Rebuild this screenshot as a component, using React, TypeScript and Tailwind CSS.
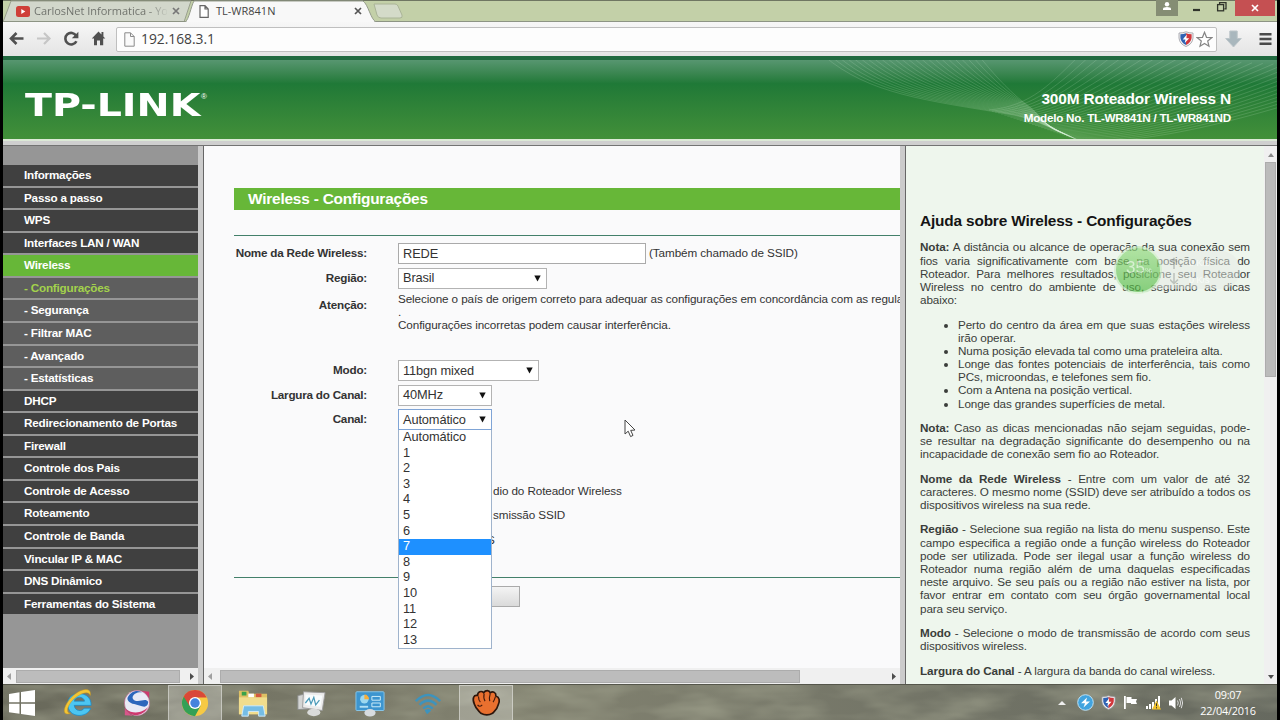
import type { ReactNode } from "react";

type MenuItem = { label: string; kind?: "active" | "sub" | "current" };

const menu: MenuItem[] = [
  { label: "Informações" },
  { label: "Passo a passo" },
  { label: "WPS" },
  { label: "Interfaces LAN / WAN" },
  { label: "Wireless", kind: "active" },
  { label: "- Configurações", kind: "current" },
  { label: "- Segurança", kind: "sub" },
  { label: "- Filtrar MAC", kind: "sub" },
  { label: "- Avançado", kind: "sub" },
  { label: "- Estatísticas", kind: "sub" },
  { label: "DHCP" },
  { label: "Redirecionamento de Portas" },
  { label: "Firewall" },
  { label: "Controle dos Pais" },
  { label: "Controle de Acesso" },
  { label: "Roteamento" },
  { label: "Controle de Banda" },
  { label: "Vincular IP & MAC" },
  { label: "DNS Dinâmico" },
  { label: "Ferramentas do Sistema" },
];

const menuStyles = {
  normal: "bg-[#404040] text-white",
  active: "bg-[#67b738] text-white",
  sub: "bg-[#5e5e5e] text-white",
  current: "bg-[#5e5e5e] text-[#a3d24c]",
};

const channels = ["Automático", "1", "2", "3", "4", "5", "6", "7", "8", "9", "10", "11", "12", "13"];

function TabStrip() {
  return (
    <div className="relative h-[22px] shrink-0 bg-[#c3d0a8] border-t border-[#6f7662] font-['Open_Sans',sans-serif] text-[11px]">
      <svg className="absolute -left-[3px] -top-px" width="1280" height="22" viewBox="0 0 1280 22">
        <path d="M3 22 L11 1 H191 L184 22Z" fill="#d2d7cb" stroke="#9aa08e" />
        <path d="M0 21.5 H1280" stroke="#8d9484" />
        <path d="M185 22 C189 20 191 6 194 1 H363 C368 4 371 20 376 22Z" fill="#f8f8f8" stroke="#959b8c" />
        <path d="M187 21.5 H374" stroke="#f8f8f8" strokeWidth="2" />
        <path d="M374 4 H395 Q397 4 398 6 L402 15 Q403 18 400 18 H381 Q378 18 377 15Z" fill="#d4dbc9" stroke="#aab497" />
      </svg>
      <div className="relative flex h-5 items-center">
        <svg className="ml-[13px]" width="14" height="11" viewBox="0 0 14 11">
          <rect width="14" height="11" rx="2.5" fill="#cf3f38" />
          <path d="M5.3 3 L9.3 5.5 L5.3 8Z" fill="#fff" />
        </svg>
        <span className="ml-1 w-[133px] overflow-hidden whitespace-nowrap bg-linear-to-r from-[#6c6f69] from-85% to-[#c9cec3] bg-clip-text tracking-[-0.02px] text-transparent">CarlosNet Informatica - Yo</span>
        <CloseMark className="ml-[5px]" color="#777" />
        <svg className="ml-[19px]" width="10" height="13" viewBox="0 0 10 13">
          <path d="M1 .7 H6 L9.2 4 V12.3 H1Z M6 .7 V4 H9.2" fill="#fff" stroke="#666" strokeWidth="1.2" />
        </svg>
        <span className="ml-[7px] w-[138px] text-[#444]">TL-WR841N</span>
        <CloseMark color="#555" />
      </div>
      <div className="absolute right-[2px] -top-px flex">
        <div className="flex h-4 w-[22px] justify-center bg-[#858d74]">
          <svg width="10" height="14" viewBox="0 0 10 14" fill="#fff">
            <circle cx="5" cy="4.3" r="2.2" />
            <path d="M1 10 V8.5 Q1.5 7 5 7 Q8.5 7 9 8.5 V10Z" />
          </svg>
        </div>
        <svg width="57" height="16" viewBox="0 0 57 16" fill="none" stroke="#30342b" strokeWidth="1.3">
          <path d="M15 10 H22" strokeWidth="2.2" />
          <rect x="39.6" y="4.6" width="6" height="6.2" />
          <path d="M41.6 4 V2.7 H48 V8.8 H46.4" />
        </svg>
        <div className="flex h-4 w-10 items-center justify-center bg-[#c55052]">
          <CloseMark color="#fff" />
        </div>
      </div>
    </div>
  );
}

function CloseMark({ color, className }: { color: string; className?: string }) {
  return (
    <svg className={className} width="8" height="8" viewBox="0 0 8 8">
      <path d="M1 1 L7 7 M7 1 L1 7" stroke={color} strokeWidth="1.7" />
    </svg>
  );
}

function Shield({ size }: { size: number }) {
  return (
    <svg width={size} height={size} viewBox="0 0 16 16">
      <path d="M1 2 Q5 2 8 .8 Q11 2 15 2 V7 Q14.5 13 8 15.5 Q1.5 13 1 7Z" fill="#f2f2f2" stroke="#9b9ba2" strokeWidth=".8" />
      <path d="M2.4 3.3 Q5.5 3.2 8 2.2 V14 Q3 11.5 2.4 7Z" fill="#2f62b3" />
      <path d="M13.6 3.3 Q10.5 3.2 8 2.2 V14 Q13 11.5 13.6 7Z" fill="#d1363b" />
      <path d="M8.8 3.5 L4.7 8.4 H7.4 L6.8 12 L11.2 7.2 H8.4Z" fill="#fff" />
    </svg>
  );
}

function Toolbar() {
  return (
    <div className="flex h-[34px] shrink-0 items-center bg-linear-to-b from-[#f7f7f7] to-[#e4e4e4] pl-[5px]">
      <svg className="shrink-0" width="100" height="24" viewBox="8 27 100 24" fill="none" stroke="#505050" strokeWidth="2.6">
        <path d="M11 38.5 H23.5 M16.5 33 L11 38.5 L16.5 44" />
        <path d="M37 38.5 H49.5 M44 33 L49.5 38.5 L44 44" stroke="#c6c6c6" strokeWidth="2.2" />
        <path d="M76.2 35.8 A5.8 5.8 0 1 0 76.4 41.2" />
        <path d="M78.4 31.8 V38.3 H71.8Z" fill="#505050" stroke="none" />
        <path d="M98.5 31.5 L91.8 38.6 H94 V45.3 H97 V40.5 H100 V45.3 H103.2 V38.6 H105.3 L103.4 36.5 V32 H101.5 V34.4Z" fill="#505050" stroke="none" />
      </svg>
      <div className="ml-2 flex h-[25px] w-[1101px] shrink-0 items-center rounded-[2px] border border-[#bfbfbf] bg-[#fdfdfd] pl-[7px] pr-[3px]">
        <svg width="11" height="15" viewBox="0 0 11 15">
          <path d="M.8 .8 H6.5 L10.2 4.5 V14.2 H.8Z M6.5 .8 V4.5 H10.2" fill="#fafafa" stroke="#8b8b8b" />
        </svg>
        <span className="ml-[6px] flex-1 font-['Open_Sans',sans-serif] text-[13.8px] leading-none text-[#414141]">192.168.3.1</span>
        <Shield size={16} />
        <svg className="ml-0.5" width="17" height="17" viewBox="0 0 17 17">
          <path d="M8.5 1.3 L10.5 6.3 L15.8 6.6 L11.7 10 L13 15.3 L8.5 12.4 L4 15.3 L5.3 10 L1.2 6.6 L6.5 6.3Z" fill="#fff" stroke="#858585" strokeWidth="1.2" />
        </svg>
      </div>
      <svg className="ml-2" width="17" height="18" viewBox="0 0 17 18">
        <path d="M4.8 1 H12.2 V8.5 H16.3 L8.5 17 L.7 8.5 H4.8Z" fill="#a9b7bd" stroke="#bcc5c9" />
      </svg>
      <svg className="ml-[17px]" width="13" height="14" viewBox="0 0 13 14" stroke="#4a4a4a" strokeWidth="2.5">
        <path d="M.5 2.2 H12.5 M.5 7 H12.5 M.5 11.8 H12.5" />
      </svg>
    </div>
  );
}

// Two fans of hairlines that cross under the model name
function HeaderWaves() {
  const left = Array.from({ length: 24 }, (_, i) => i / 23);
  const right = Array.from({ length: 30 }, (_, i) => i / 29);
  return (
    <svg className="absolute right-0 -top-1" width="480" height="83" viewBox="3 -4 480 83" fill="none" stroke="#d9f5dc" strokeWidth=".7">
      {left.map((t) => (
        <path
          key={`l${t}`}
          strokeOpacity={0.24}
          d={`M${30 + t * 155} -4 C${75 + t * 123} ${34 - t * 22} ${130 + t * 82} ${40 - t * 12} ${220 + t * 8} ${55 - t * 14} C${245 + t * 5} ${61 - t * 5} ${264 - t * 14} ${71 - t * 4} ${284 - t * 20} ${80 - t * 9}`}
        />
      ))}
      {right.map((t) => (
        <path
          key={`r${t}`}
          strokeOpacity={0.24}
          d={`M${195 + t * 89} ${50 + t * 30} C${238 + t * 112} ${46 + t * 40} ${258 + t * 202} ${22 + t * 38} ${287 + t * 310} ${-6 + t * 16}`}
        />
      ))}
    </svg>
  );
}

function Header() {
  return (
    <header className="relative flex h-[83px] shrink-0 justify-between overflow-hidden border-t-4 border-[#20693f] bg-linear-to-b from-[#579670] via-[#1f7937] via-30% to-[#429039] text-white">
      <HeaderWaves />
      <div className="flex pl-[22px] pt-[34px]">
        <span className="w-[175px] origin-left scale-x-[1.255] whitespace-nowrap font-['DejaVu_Sans',sans-serif] text-[31.5px] leading-[23px] font-bold">
          TP-LINK
        </span>
        <span className="ml-[1px] -mt-1 text-[8px] leading-[14px]">®</span>
      </div>
      <div className="relative pr-[46px] pt-[30px] text-right font-bold whitespace-nowrap">
        <div className="text-[15.4px] leading-[18px] tracking-[-0.15px]">300M Roteador Wireless N</div>
        <div className="mt-[3px] text-[11.7px] leading-[14px] tracking-[-0.25px]">Modelo No. TL-WR841N / TL-WR841ND</div>
      </div>
    </header>
  );
}

function HScroll({ thumb }: { thumb: string }) {
  return (
    <div className="flex h-4 shrink-0 items-center justify-between bg-[#f0f0f0] px-1">
      <svg width="4" height="7" viewBox="0 0 4 7"><path d="M4 0 L0 3.5 L4 7Z" fill="#a0a0a0" /></svg>
      <div className="flex flex-1 pl-2 pr-2"><div className={`h-[13px] border border-[#acacac] bg-[#bcbcbc] ${thumb}`} /></div>
      <svg width="4" height="7" viewBox="0 0 4 7"><path d="M0 0 L4 3.5 L0 7Z" fill="#4d4d4d" /></svg>
    </div>
  );
}

function Sidebar() {
  return (
    <nav className="flex w-[195px] shrink-0 flex-col bg-[#969696]">
      <div className="flex-1 pt-[19px]">
        {menu.map((item) => (
          <div key={item.label} className="h-[22.57px] pb-[2px]">
            <div className={`h-full pl-[21px] text-[11.7px] leading-[20.5px] font-bold tracking-[-0.21px] whitespace-nowrap ${menuStyles[item.kind ?? "normal"]}`}>
              {item.label}
            </div>
          </div>
        ))}
      </div>
      <HScroll thumb="w-[164px] -ml-[3px]" />
    </nav>
  );
}

function Divider() {
  return <div className="w-[6px] shrink-0 border-r border-[#666] bg-[#cbcbcb]" />;
}

function Select({ value, width, focused }: { value: string; width: string; focused?: boolean }) {
  return (
    <div className={`flex h-[21px] items-center justify-between border bg-white pl-1 pr-[5px] text-[12.8px] tracking-[-0.12px] ${width} ${focused ? "border-[#7fa4d6]" : "border-[#b3b3b3]"}`}>
      <span>{value}</span>
      <svg width="7" height="7" viewBox="0 0 7 7"><path d="M.3 .5 H6.7 L3.5 6.5Z" fill="#111" /></svg>
    </div>
  );
}

function Row({ label, height, children }: { label?: string; height: string; children?: ReactNode }) {
  return (
    <div className={`flex items-center ${height}`}>
      <div className="w-[133px] shrink-0 pb-px text-right font-bold tracking-[-0.23px] whitespace-nowrap">{label}</div>
      <div className="ml-[31px] flex items-center">{children}</div>
    </div>
  );
}

function Settings() {
  return (
    <main className="flex w-[696px] shrink-0 flex-col overflow-hidden bg-[#fafafb] text-[11.7px] tracking-[-0.1px] text-[#333]">
      <div className="flex-1 overflow-hidden pl-[30px] pt-[42px] whitespace-nowrap">
        <h1 className="h-[22px] bg-[#67b738] pl-[14px] text-[15.4px] leading-[21px] font-bold tracking-[-0.2px] text-white">Wireless - Configurações</h1>
        <div className="mt-[25px] h-px bg-[#43806a]" />
        <div className="pt-[5px]">
          <Row label="Nome da Rede Wireless:" height="h-[25px]">
            <div className="h-[21px] w-[248px] border border-[#aaa] bg-white pl-1 text-[12.8px] leading-[20px]">REDE</div>
            <span className="ml-[3px] pb-[2px] tracking-[-0.08px]">(Também chamado de SSID)</span>
          </Row>
          <Row label="Região:" height="h-6"><Select value="Brasil" width="w-[149px]" /></Row>
          <div className="flex h-[68px] leading-[13.2px]">
            <div className="w-[133px] shrink-0 pt-[8px] text-right font-bold tracking-[-0.23px]">Atenção:</div>
            <div className="ml-[31px] pt-[1.6px]">
              <p>Selecione o país de origem correto para adequar as configurações em concordância com as regulamentações</p>
              <p>.</p>
              <p>Configurações incorretas podem causar interferência.</p>
            </div>
          </div>
          <Row label="Modo:" height="h-[25px]"><Select value="11bgn mixed" width="w-[141px]" /></Row>
          <Row label="Largura do Canal:" height="h-6"><Select value="40MHz" width="w-[94px]" /></Row>
          <Row label="Canal:" height="h-[25px]">
            <div className="relative">
              <Select value="Automático" width="w-[94px]" focused />
              <ul className="absolute top-full left-0 z-10 w-[94px] border border-t-0 border-[#9fb3cc] bg-white text-[12.8px] leading-[14.6px]">
                {channels.map((c) => (
                  <li key={c} className={c === "7" ? "bg-[#1e90ff] pb-px pl-1 text-white" : "pb-px pl-1"}>{c}</li>
                ))}
              </ul>
            </div>
          </Row>
          <div className="pt-[47px] pl-[259px] leading-[24.4px]">
            <p>dio do Roteador Wireless</p>
            <p>smissão SSID</p>
            <p className="-ml-[6px]">S</p>
          </div>
        </div>
        <div className="mt-[25px] h-px bg-[#43806a]" />
        <div className="mt-[8px] ml-[164px] h-[21px] w-[122px] border border-[#aaa] bg-linear-to-b from-[#f4f4f4] to-[#dadada]" />
      </div>
      <HScroll thumb="w-[580px]" />
    </main>
  );
}

// Each line is set on its own so the justified breaks stay put
function Lines({ lines }: { lines: ReactNode[] }) {
  return (
    <>
      {lines.map((line, i) => (
        <span key={i} className={i < lines.length - 1 ? "block text-justify [text-align-last:justify]" : "block"}>
          {line}
        </span>
      ))}
    </>
  );
}

function Help() {
  return (
    <aside className="flex min-w-0 flex-1 bg-[#eef6ed] text-[11.7px] leading-[13.17px] tracking-[-0.1px] text-[#3a3d3a]">
      <div className="flex-1 overflow-hidden pl-[14px] pr-[14px] pt-[66px] whitespace-nowrap">
        <h2 className="text-[15.4px] leading-[18px] font-bold tracking-[-0.17px] text-[#141414]">Ajuda sobre Wireless - Configurações</h2>
        <div className="flex flex-col gap-[11.25px] pt-[10.4px]">
          <p>
            <Lines
              lines={[
                <><b>Nota:</b> A distância ou alcance de operação da sua conexão sem</>,
                "fios varia significativamente com base na posição física do",
                "Roteador. Para melhores resultados, posicione seu Roteador",
                "Wireless no centro do ambiente de uso, seguindo as dicas",
                "abaixo:",
              ]}
            />
          </p>
          <ul className="list-disc pl-[38px]">
            <li><Lines lines={["Perto do centro da área em que suas estações wireless", "irão operar."]} /></li>
            <li><Lines lines={["Numa posição elevada tal como uma prateleira alta."]} /></li>
            <li><Lines lines={["Longe das fontes potenciais de interferência, tais como", "PCs, microondas, e telefones sem fio."]} /></li>
            <li><Lines lines={["Com a Antena na posição vertical."]} /></li>
            <li><Lines lines={["Longe das grandes superfícies de metal."]} /></li>
          </ul>
          <p>
            <Lines
              lines={[
                <><b>Nota:</b> Caso as dicas mencionadas não sejam seguidas, pode-</>,
                "se resultar na degradação significante do desempenho ou na",
                "incapacidade de conexão sem fio ao Roteador.",
              ]}
            />
          </p>
          <p>
            <Lines
              lines={[
                <><b>Nome da Rede Wireless</b> - Entre com um valor de até 32</>,
                "caracteres. O mesmo nome (SSID) deve ser atribuído a todos os",
                "dispositivos wireless na sua rede.",
              ]}
            />
          </p>
          <p>
            <Lines
              lines={[
                <><b>Região</b> - Selecione sua região na lista do menu suspenso. Este</>,
                "campo especifica a região onde a função wireless do Roteador",
                "pode ser utilizada. Pode ser ilegal usar a função wireless do",
                "Roteador numa região além de uma daquelas especificadas",
                "neste arquivo. Se seu país ou a região não estiver na lista, por",
                "favor entrar em contato com seu órgão governamental local",
                "para seu serviço.",
              ]}
            />
          </p>
          <p>
            <Lines lines={[<><b>Modo</b> - Selecione o modo de transmissão de acordo com seus</>, "dispositivos wireless."]} />
          </p>
          <p>
            <Lines lines={[<><b>Largura do Canal</b> - A largura da banda do canal wireless.</>]} />
          </p>
        </div>
      </div>
      <div className="flex w-[13px] shrink-0 flex-col items-center justify-between bg-[#f0f0f0] pt-[7px] pb-[5px]">
        <svg width="6" height="4" viewBox="0 0 6 4"><path d="M0 4 L3 0 L6 4Z" fill="#888" /></svg>
        <div className="mt-[5px] mb-auto h-[215px] w-[11px] border border-[#acacac] bg-[#bbb]" />
        <svg width="6" height="4" viewBox="0 0 6 4"><path d="M0 0 L3 4 L6 0Z" fill="#4d4d4d" /></svg>
      </div>
    </aside>
  );
}

// Memory / network meter floating over the help column
function SpeedBadge() {
  return (
    <div className="absolute left-[1111px] top-[246px] z-20 h-12 w-[128px] opacity-80">
      <div className="absolute left-6 top-[5px] h-[38px] w-[102px] rounded-r-full bg-[#e6ebe6]/60" />
      <svg className="absolute left-[56px] top-[10px]" width="60" height="30" viewBox="0 0 60 30" fill="none" stroke="#8d938d" strokeOpacity=".6" strokeWidth="1.6">
        <path d="M4 13 V3 M1 6 L4 2.5 L7 6" />
        <path d="M4 17 V27 M0 23.5 L4 27.5 L8 23.5" />
      </svg>
      <div className="absolute left-[75px] top-[9px] text-[9px] leading-[17px] text-white/70">
        <div>0 K/s</div>
        <div>0 K/s</div>
      </div>
      <div className="absolute left-0 top-0 size-12 rounded-full border-2 border-white/60 bg-linear-to-b from-[#8fda7a]/80 to-[#4bb93c]/80" />
      <div className="absolute left-[12px] top-[12px] text-[17px] leading-5 text-white/60">35<span className="text-[8px]">%</span></div>
    </div>
  );
}

function TaskIcon({ active, children }: { active?: boolean; children: ReactNode }) {
  return (
    <div className={`flex h-full w-[54px] items-center justify-center ${active ? "border border-white/40 border-b-0 bg-white/25" : ""}`}>
      <svg width="30" height="30" viewBox="0 0 32 32">{children}</svg>
    </div>
  );
}

function Taskbar() {
  return (
    <footer className="relative flex h-9 shrink-0 items-center border-t border-[#55564b] bg-linear-to-r from-[#68685a] via-[#828270] via-40% to-[#66695f]">
      {/* blurred grass behind the glass */}
      <svg className="absolute inset-0 size-full" preserveAspectRatio="none">
        <filter id="grass">
          <feTurbulence type="fractalNoise" baseFrequency="0.015 0.05" numOctaves="3" seed="7" />
          <feColorMatrix values="0 0 0 0 .38  0 0 0 0 .39  0 0 0 0 .29  1.1 0 0 0 -.38" />
        </filter>
        <rect width="100%" height="100%" filter="url(#grass)" />
      </svg>
      <div className="relative flex h-full gap-[4.3px] pl-0">
        <div className="flex h-full w-[44px] items-center pl-[5px] mr-[-6px]">
          <svg width="28" height="28" viewBox="0 0 28 28" fill="#fff">
            <path d="M1 5 L11.5 3.3 V13.2 H1Z M13 3 L27 1 V13.2 H13Z M1 14.7 H11.5 V24.8 L1 23.3Z M13 14.7 H27 V27 L13 25Z" />
          </svg>
        </div>
        <div className="h-full pl-1.5"><TaskIcon>
          <path fillRule="evenodd" d="M30 18.5 H12 C12.5 25 20.5 25.5 22.5 21.5 H29.5 C26 32.5 5 32.5 5 17 C5 2 30.5 2 30 18.5Z M12 14 H23 C22 8.5 13 8.5 12 14Z" fill="#4cc6f2" stroke="#1889c9" strokeWidth=".8" />
          <path d="M8 27 C-3 31 1 17 11 8 C20 0 31 -1 29 8 C28 3 20 5 13 10.5 C5 17 2 27 8 27Z" fill="#f3c534" stroke="#c9951c" strokeWidth=".5" />
        </TaskIcon></div>
        <TaskIcon>
          <circle cx="16" cy="16" r="13.5" fill="#e9eaf5" />
          <path d="M6 10 C11 1 20 3 21 5 C15 3 8 10 13 13 C19 16 25 10 28 15 C27 24 19 18 13 17 C8 16 5 13 6 10Z" fill="#2d67bc" />
          <path d="M4 22 C8 31 22 32 28 20 C23 26 12 29 4 22Z M20 3 L29 4 V11 C27 7 24 4 20 3Z" fill="#cf386e" />
          <path d="M3 29 V21 C5 25 8 28 12 29.5Z" fill="#d7568a" />
          <circle cx="16" cy="16" r="13.5" fill="none" stroke="#b3386b" strokeOpacity=".5" />
        </TaskIcon>
        <TaskIcon active>
          <circle cx="16" cy="16" r="14" fill="#f6c944" />
          <path d="M16 16 L3.9 9 A14 14 0 0 0 16 30 L22 19Z" fill="#33a056" />
          <path d="M16 16 L10 19 L3.9 9 A14 14 0 0 1 28.5 10 H16Z" fill="#d94838" />
          <circle cx="16" cy="16" r="6.5" fill="#fff" />
          <circle cx="16" cy="16" r="5" fill="#4583dd" />
        </TaskIcon>
        <TaskIcon>
          <path d="M1 3 H11 L12 6 H31 V28 H1Z" fill="#dec064" />
          <path d="M4 4 h5 v4 h-5z" fill="#39a34a" /><path d="M11 6 h6 v4 h-6z" fill="#fff" /><path d="M19 6 h6 v4 h-6z" fill="#d3593f" />
          <path d="M1 10 H31 V28 H1Z" fill="#f1dd8d" />
          <path d="M4 30 L6 19 H27 L29 30 H22 V25 H11 V30Z" fill="#75bde5" stroke="#d4edfa" />
        </TaskIcon>
        <TaskIcon>
          <path d="M2 8 L17 5 V22 L2 23Z" fill="#d4d5d4" stroke="#8c8e8d" />
          <path d="M8 4 L31 5 L28 24 L7 21Z" fill="#ececec" stroke="#9b9b9b" />
          <path d="M10 7 L28 8 L26 20 L10 18Z" fill="#f8fcfd" />
          <path d="M10 16 L14 11 L16 17 L19 10 L21 18 L25 13" fill="none" stroke="#4a9ab8" strokeWidth="1.3" />
          <ellipse cx="19" cy="26" rx="7" ry="4" fill="#dadbda" />
        </TaskIcon>
        <TaskIcon>
          <rect x="1" y="4" width="30" height="20" rx="1" fill="#3d95cf" stroke="#89c8eb" />
          <circle cx="10" cy="12" r="4.5" fill="#9dd8ef" /><path d="M10 12 V7 A5 5 0 0 1 15 12Z" fill="#f6ae3a" />
          <path d="M18 9 h9 v4 h-9z M18 16 h9 v4 h-9z" fill="none" stroke="#d2f0fb" />
          <path d="M5 20 H14" stroke="#b3e0f5" strokeWidth="2" />
          <ellipse cx="16" cy="26.5" rx="6" ry="4" fill="#d8dcdf" />
        </TaskIcon>
        <TaskIcon>
          <g fill="none" stroke="#3d93bd" strokeWidth="2.7">
            <path d="M3 14 Q16 1 29 14" /><path d="M7 18 Q16 9 25 18" /><path d="M11 22 Q16 17 21 22" />
          </g>
          <path d="M12.5 24 Q16 21 19.5 24 L15 28Z" fill="#3d93bd" />
        </TaskIcon>
        <TaskIcon active>
          {/* closed fist: four knuckles, thumb across the palm */}
          <path d="M3.5 17 C1 11 3 7 7 8 C7 4 11 2.5 13.5 5 C15.5 2 19.5 2 20.5 5 C23.5 3 27 5 26.5 8.5 C30.5 9.5 31 14 29 18 C28 23 25 25 23 27 Q17 30.5 10.5 27 C8 24 5 22 3.5 17Z" fill="#e9702f" stroke="#2d160c" strokeWidth="1.8" />
          <path d="M8 9 Q8 13 10 15 M14 6 Q13 11 15 14 M20.5 6 Q19 11 20 14 M26 9.5 Q25 13 23.5 15 M7 18 Q9 21 12 18" fill="none" stroke="#42190c" strokeWidth="1.2" />
        </TaskIcon>
      </div>
      <div className="relative ml-auto flex items-center pr-[20px]">
        <svg width="8" height="5" viewBox="0 0 8 5"><path d="M0 5 L4 1 L8 5Z" fill="#eee" /></svg>
        <svg className="ml-[11px]" width="17" height="17" viewBox="0 0 17 17">
          <circle cx="8.5" cy="8.5" r="7.8" fill="#42a4df" stroke="#bde1f4" /><path d="M10 3.5 L4 9.3 H8 L6.5 13.5 L13 7.6 H9Z" fill="#fff" />
        </svg>
        <span className="ml-[7px]"><Shield size={15} /></span>
        <svg className="ml-[7px]" width="15" height="15" viewBox="0 0 15 15" fill="#fff"><path d="M1 1 H2.8 V14 H1Z M3.5 2 H8.5 V4 H14 L13 6.5 L14 9 H8 V8 H3.5Z" /></svg>
        <svg className="ml-[8px]" width="15" height="15" viewBox="0 0 15 15">
          <path d="M0 11 h2 v3 h-2z M3 9 h2 v5 h-2z M6 7 h2 v7 h-2z M9 4 h2 v10 h-2z M12 1 h2 v13 h-2z" fill="#fff" />
          <path d="M10.5 5.5 L15 14.5 H6Z" fill="#f0c22b" /><path d="M10.5 8.3 V11.2 M10.5 12.2 V13.4" stroke="#333" />
        </svg>
        <svg className="ml-[8px]" width="14" height="14" viewBox="0 0 14 14">
          <path d="M0 4.5 H2.5 L6.5 1 V13 L2.5 9.5 H0Z" fill="#fff" />
          <path d="M8.5 4.5 Q10 7 8.5 9.5 M10.5 3 Q13 7 10.5 11 M12.3 1.8 Q15 7 12.3 12.2" fill="none" stroke="#ddd" />
        </svg>
        <div className="ml-[16px] w-[58px] text-center font-['Open_Sans',sans-serif] text-[10.9px] leading-[16px] tracking-[-0.25px] whitespace-nowrap text-white">
          <div>09:07</div>
          <div>22/04/2016</div>
        </div>
      </div>
    </footer>
  );
}

export default function App() {
  return (
    <div className="relative flex h-[720px] w-[1280px] flex-col overflow-hidden border-x-[3px] border-black bg-[#d0d0d0] font-['Liberation_Sans',Arial,sans-serif]">
      <TabStrip />
      <Toolbar />
      <Header />
      <div className="h-[7px] shrink-0 border-t-2 border-b border-t-[#dce9d6] border-b-[#737373] bg-[#cfcfcf]" />
      <div className="flex h-[538px] shrink-0">
        <Sidebar />
        <Divider />
        <Settings />
        <Divider />
        <Help />
      </div>
      <Taskbar />
      <SpeedBadge />
      <svg className="absolute left-[621px] top-[419px] z-20" width="12" height="19" viewBox="0 0 12 19">
        <path d="M1 1 V15 L4.2 12.2 L6.6 17.6 L9 16.4 L6.7 11.4 L11 11Z" fill="#fff" stroke="#444" />
      </svg>
    </div>
  );
}
